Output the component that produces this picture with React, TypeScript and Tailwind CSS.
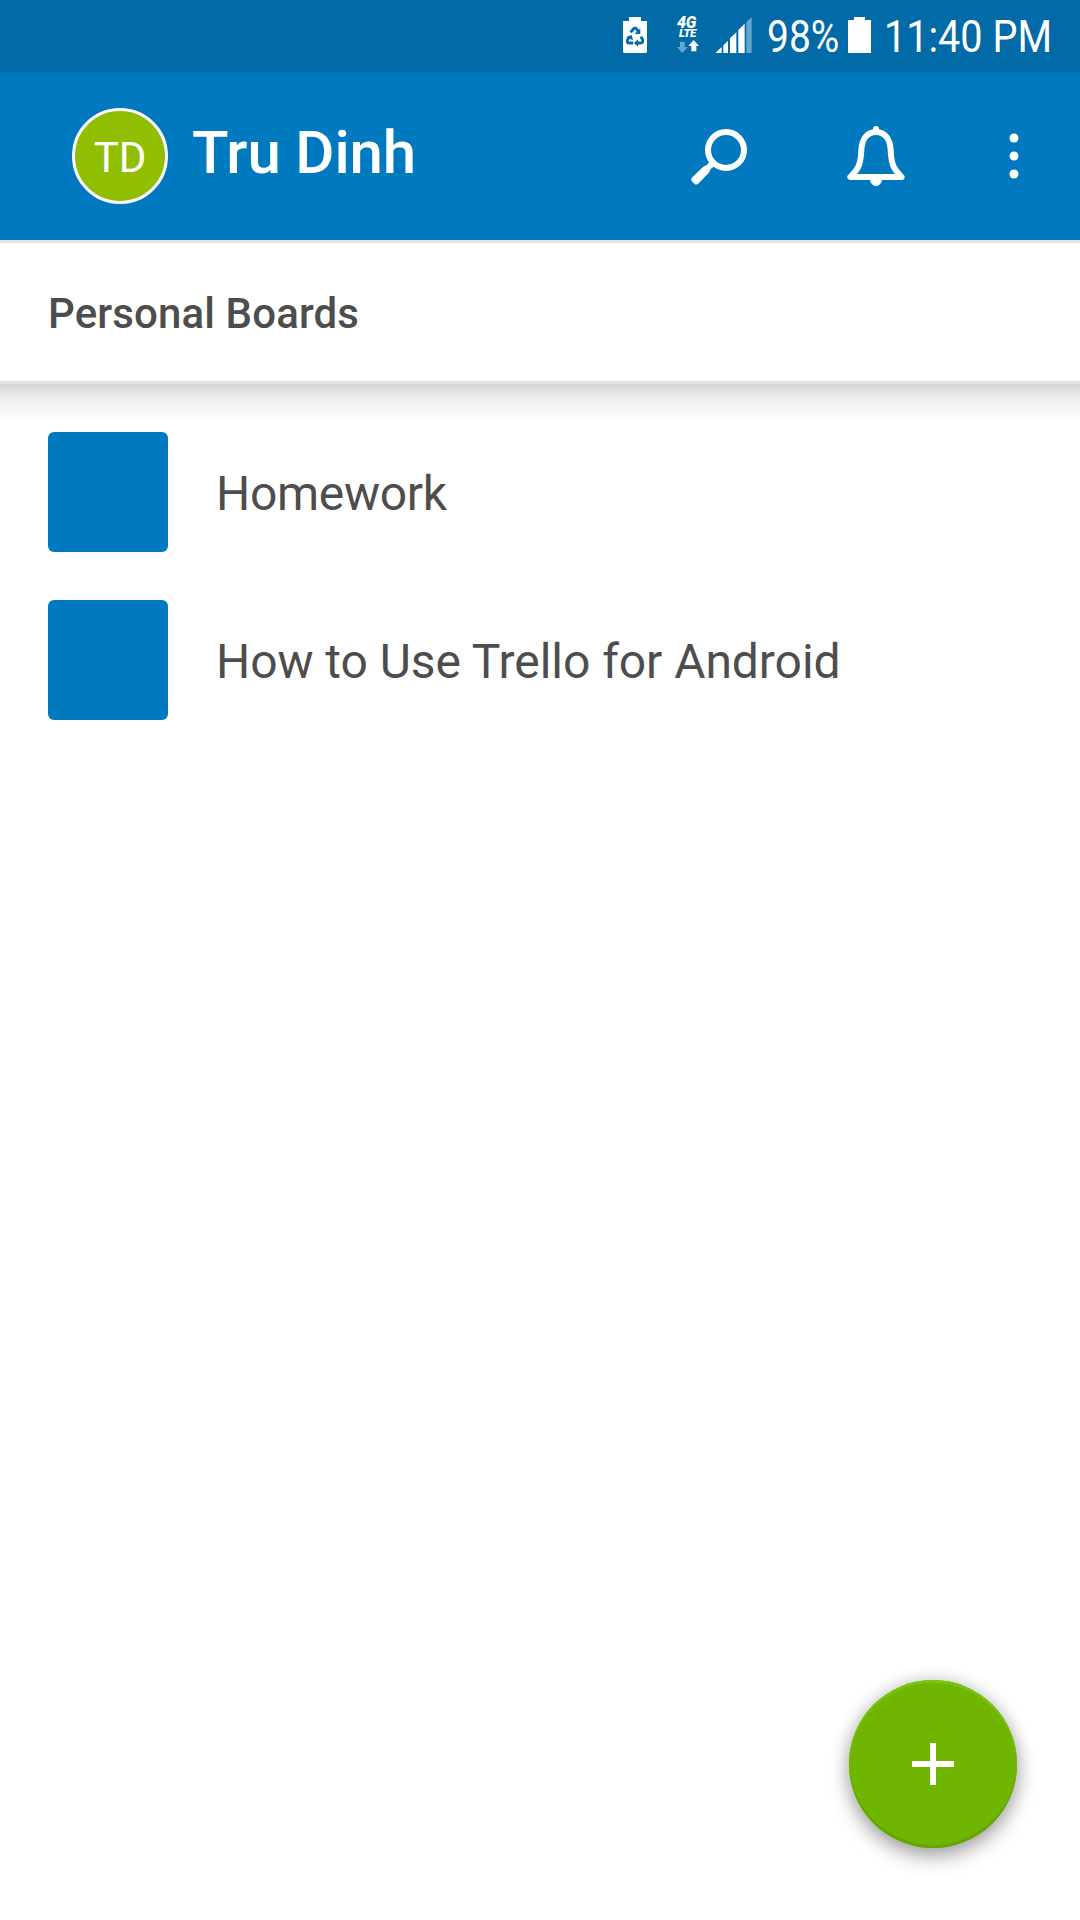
import React from "react";

const boards = [
  { name: "Homework", tracking: "tracking-[-0.3px]" },
  { name: "How to Use Trello for Android", tracking: "tracking-[-0.06px]" },
];

function RecycleBattery() {
  return (
    <svg className="ml-[623px] h-9 w-6 shrink-0" viewBox="0 0 72 108">
      <path d="M0 12H18V0H54V12H72V105L69 108H3L0 105Z" fill="#fff" />
      <g fill="none" stroke="#026aa7" strokeWidth="8.5">
        <path d="M23 46L31 36Q36 30 41 36L46 44" />
        <path d="M54 59L59 69Q61 78 53 78H43" />
        <path d="M31 78H19Q11 78 13 70L19 60" />
      </g>
      <g fill="#026aa7">
        <path d="M52 34V51H35Z" />
        <path d="M45 67V89L33 78Z" />
        <path d="M9 60L26 54L30 70Z" />
      </g>
    </svg>
  );
}

function Network() {
  return (
    <div className="ml-[30px] flex h-9 w-[23px] shrink-0 flex-col leading-none font-black italic">
      <span className="h-3 shrink-0 text-[16px] leading-[12px] tracking-[-0.2px]">4G</span>
      <span className="h-[9px] shrink-0 pl-[2px] text-[11.5px] leading-[9px] tracking-[-0.5px]">LTE</span>
      <svg className="mt-[2px] h-[13px] w-[22px] shrink-0" viewBox="0 0 66 39">
        <path d="M9 5H23V21H32L16 39L0 21H9Z" fill="#67a6ca" />
        <path d="M43 34H58V18H66L50 0L34 18H43Z" fill="#fff" />
      </svg>
    </div>
  );
}

function Signal() {
  return (
    <svg className="ml-[15px] h-9 w-[37px] shrink-0" viewBox="0 0 111 108">
      <path d="M1 108L20 90V108Z M25 85L39 71V108H25Z M45 64L64 46V108H45Z M70 39L89 20V108H70Z" fill="#fff" />
      <path d="M94 15L110 0V108H94Z" fill="#67a6ca" />
    </svg>
  );
}

export default function App() {
  return (
    <div className="flex h-[1920px] w-[1080px] flex-col overflow-hidden bg-white font-['Roboto',sans-serif]">
      <div className="flex h-[72px] items-center bg-[#026aa7] pb-[2px] text-white">
        <RecycleBattery />
        <Network />
        <Signal />
        <span className="ml-[15px] w-[72px] shrink-0 pt-1 text-[45px] leading-[52px] whitespace-nowrap">
          <span className="inline-block origin-left scale-x-[0.865]">98%</span>
        </span>
        <svg className="ml-[9px] h-9 w-[23px] shrink-0" viewBox="0 0 69 108">
          <path d="M0 9H18V0H51V9H69V108H0Z" fill="#fff" />
        </svg>
        <span className="ml-[13px] w-[170px] pt-1 text-[45px] leading-[52px] whitespace-nowrap">
          <span className="inline-block origin-left scale-x-[0.88]">11:40 PM</span>
        </span>
      </div>

      <header className="flex h-[168px] shrink-0 items-center bg-[#0079bf] text-white">
        <div className="ml-[72px] flex size-24 shrink-0 items-center justify-center rounded-full border-[3px] border-white bg-[#8fbf00] pt-[2px] text-[42px]">
          TD
        </div>
        <h1 className="ml-6 flex-1 pb-[7px] text-[60px] leading-[70px] font-medium tracking-[-0.15px]">Tru Dinh</h1>
        <svg className="size-[60px]" viewBox="60 78 180 180">
          <circle cx="168" cy="150" r="54" fill="none" stroke="#fff" strokeWidth="18" />
          <path d="M118 186L131 200L122 207Q120 214 116 219L86 250Q79 257 73 251L67 245Q60 239 67 232L98 202Q103 198 110 196Z" fill="#fff" />
        </svg>
        <svg className="ml-24 size-[60px]" viewBox="528 78 180 180">
          <path d="M618 96C590 96 576 118 574 150C573 180 571 190 563 204C556 216 548 223 541 231H695C688 223 680 216 673 204C665 190 663 180 662 150C660 118 646 96 618 96Z" fill="none" stroke="#fff" strokeWidth="18" strokeLinejoin="round" />
          <circle cx="618" cy="87" r="9" fill="#fff" />
          <path d="M600 238H636A18 20 0 0 1 600 238Z" fill="#fff" />
        </svg>
        <svg className="mr-[60px] ml-[102px] h-12 w-3" viewBox="1014 96 36 144" fill="#fff" overflow="visible">
          <circle cx="1032" cy="114" r="13.5" />
          <circle cx="1032" cy="168" r="13.5" />
          <circle cx="1032" cy="222" r="13.5" />
        </svg>
      </header>

      <div className="flex h-[144px] shrink-0 items-center border-y-[3px] border-t-[#e2e4e6] border-b-[#e2e2e2] bg-white pl-12 text-[42px] font-medium text-[#4d4d4d]">
        <h2 className="pt-[2px] tracking-[0.12px]">Personal Boards</h2>
      </div>
      <div className="h-[3px] shrink-0 bg-[#d5d5d5]" />
      <div className="h-[36px] shrink-0 bg-linear-to-b from-[#dedede] via-[#f3f3f3] to-white" />

      <ul className="mt-[9px] flex flex-col gap-12 px-12">
        {boards.map(({ name, tracking }) => (
          <li key={name} className="flex h-[120px] items-center">
            <div className="size-[120px] rounded-[6px] bg-[#0079bf]" />
            <span className={`ml-12 pt-1 text-[48px] text-[#4d4d4d] ${tracking}`}>{name}</span>
          </li>
        ))}
      </ul>

      <button
        aria-label="Add board"
        className="mt-auto mr-[63px] mb-[72px] flex size-[168px] shrink-0 items-center justify-center self-end rounded-full bg-[#70b500] shadow-[0_9px_20px_rgba(0,0,0,0.3),0_0_18px_rgba(0,0,0,0.16),inset_0_3px_1px_#79c50a,inset_0_-3px_1px_#66a500]"
      >
        <svg className="size-[42px]" viewBox="0 0 42 42">
          <path d="M18 0H24V18H42V24H24V42H18V24H0V18H18Z" fill="#fff" />
        </svg>
      </button>
    </div>
  );
}
